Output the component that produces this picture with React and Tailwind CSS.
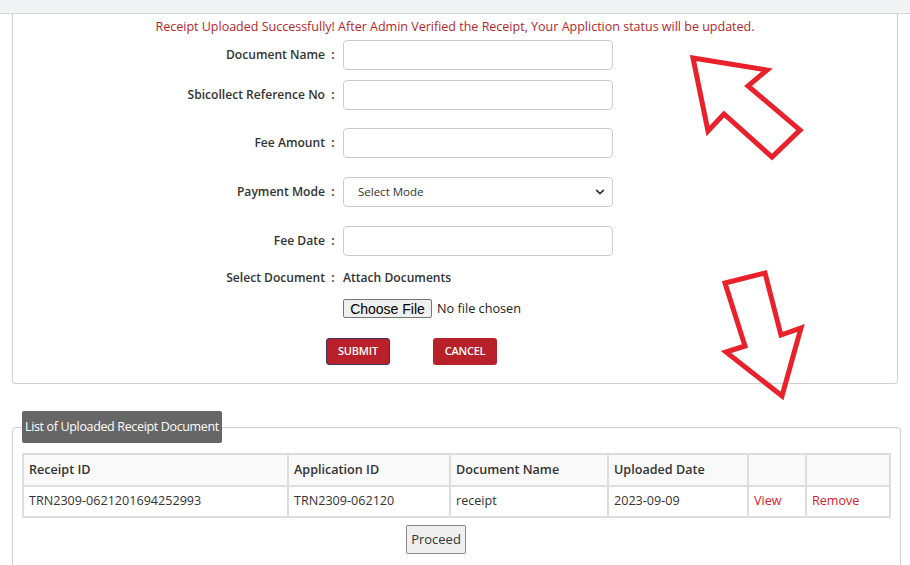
import React from "react";

function Row({ label, mt, children }) {
  return (
    <div className={`flex items-center h-[30px] ${mt}`}>
      <div className="w-[312px] text-right font-semibold text-[12.1px] text-[#333]">{label}</div>
      <div className="w-[16px] text-center font-semibold text-[12.5px] text-[#333]">:</div>
      <div className="ml-[2px]">{children}</div>
    </div>
  );
}

function TextInput() {
  return <div className="w-[270px] h-[30px] border border-[#ccc] rounded-[4px] bg-white" />;
}

export default function App() {
  return (
    <div className="relative w-[910px] h-[565px] overflow-hidden bg-white text-[#333] font-['Open_Sans','Liberation_Sans',sans-serif]">
      <div className="h-[14px] bg-[#f1f3f4] border-b border-[#d6d8db]" />

      <div className="mx-[12px] border-x border-b border-[#cfcfcf] rounded-b-[4px] pb-[18px]">
        <div className="text-center text-[#b3262e] text-[12.5px] leading-[18px] pt-[4px]">
          Receipt Uploaded Successfully! After Admin Verified the Receipt, Your Appliction status will be updated.
        </div>

        <Row label="Document Name" mt="mt-[4px]">
          <TextInput />
        </Row>
        <Row label="Sbicollect Reference No" mt="mt-[10px]">
          <TextInput />
        </Row>
        <Row label="Fee Amount" mt="mt-[18px]">
          <TextInput />
        </Row>
        <Row label="Payment Mode" mt="mt-[19px]">
          <div className="relative w-[270px] h-[30px] border border-[#ccc] rounded-[4px] bg-white flex items-center pl-[14px] text-[11.5px] text-[#333]">
            Select Mode
            <svg className="absolute right-[7px] top-[10px]" width="10" height="8" viewBox="0 0 10 8">
              <path d="M1.2 1.8 L5 5.6 L8.8 1.8" fill="none" stroke="#333" strokeWidth="1.8" />
            </svg>
          </div>
        </Row>
        <Row label="Fee Date" mt="mt-[19px]">
          <TextInput />
        </Row>

        <div className="flex items-center h-[20px] mt-[12px]">
          <div className="w-[312px] text-right font-semibold text-[12.1px]">Select Document</div>
          <div className="w-[16px] text-center font-semibold text-[12.5px]">:</div>
          <div className="ml-[2px] font-semibold text-[12.1px]">Attach Documents</div>
        </div>

        <div className="flex items-center mt-[11px] pl-[330px] h-[19px]">
          <div className="w-[89px] h-[19px] bg-[#efefef] border border-[#767676] rounded-[2px] flex items-center justify-center text-[14px] text-black font-['Liberation_Sans',Arial,sans-serif] leading-none">
            Choose File
          </div>
          <div className="ml-[5px] text-[12.7px] text-[#222]">No file chosen</div>
        </div>

        <div className="flex mt-[20px] pl-[313px]">
          <div className="w-[64px] h-[27px] bg-[#b8202a] border border-[#3c3566] rounded-[3px] flex items-center justify-center text-white text-[11px] font-semibold tracking-[-0.2px]">
            SUBMIT
          </div>
          <div className="ml-[43px] w-[64px] h-[27px] bg-[#b8202a] rounded-[3px] flex items-center justify-center text-white text-[11px] font-semibold tracking-[-0.2px]">
            CANCEL
          </div>
        </div>
      </div>

      <fieldset className="mx-[12px] mt-[27px] border border-[#cfcfcf] rounded-[4px] px-[9px] pb-[20px]">
        <legend className="h-[32px] bg-[#666] text-white text-[12.5px] leading-[32px] px-[3px] rounded-[2px] tracking-[-0.35px]">
          List of Uploaded Receipt Document
        </legend>
        <table className="mt-[10px] w-[867px] table-fixed border-collapse text-[12.6px] text-[#333]">
          <colgroup>
            <col className="w-[265px]" />
            <col className="w-[162px]" />
            <col className="w-[158px]" />
            <col className="w-[140px]" />
            <col className="w-[58px]" />
            <col className="w-[84px]" />
          </colgroup>
          <thead>
            <tr className="h-[32px] bg-[#f9f9f9]">
              <th className="border-2 border-[#ddd] text-left font-semibold pl-[5px]">Receipt ID</th>
              <th className="border-2 border-[#ddd] text-left font-semibold pl-[5px]">Application ID</th>
              <th className="border-2 border-[#ddd] text-left font-semibold pl-[5px]">Document Name</th>
              <th className="border-2 border-[#ddd] text-left font-semibold pl-[5px]">Uploaded Date</th>
              <th className="border-2 border-[#ddd]"></th>
              <th className="border-2 border-[#ddd]"></th>
            </tr>
          </thead>
          <tbody>
            <tr className="h-[31px] bg-white">
              <td className="border-2 border-[#ddd] pl-[5px]">TRN2309-0621201694252993</td>
              <td className="border-2 border-[#ddd] pl-[5px]">TRN2309-062120</td>
              <td className="border-2 border-[#ddd] pl-[5px]">receipt</td>
              <td className="border-2 border-[#ddd] pl-[5px]">2023-09-09</td>
              <td className="border-2 border-[#ddd] pl-[5px] text-[#e0202a]">View</td>
              <td className="border-2 border-[#ddd] pl-[5px] text-[#d0202e]">Remove</td>
            </tr>
          </tbody>
        </table>
        <div className="mt-[7px] pl-[384px]">
          <div className="w-[60px] h-[29px] bg-[#efefef] border border-[#8a8a8a] rounded-[2px] flex items-center justify-center text-[13px] text-[#333]">
            Proceed
          </div>
        </div>
      </fieldset>

      <svg className="absolute left-0 top-0 pointer-events-none" width="910" height="565" viewBox="0 0 910 565">
        <polygon
          points="693,58 767,70 748,86 800,130 772,157 724,114 708,131"
          fill="none"
          stroke="#e8212b"
          strokeWidth="5"
          strokeLinejoin="miter"
        />
        <polygon
          points="725,283 765,273 781,335 801,328 782,396 726,352 745,346"
          fill="none"
          stroke="#e8212b"
          strokeWidth="5"
          strokeLinejoin="miter"
        />
      </svg>
    </div>
  );
}
